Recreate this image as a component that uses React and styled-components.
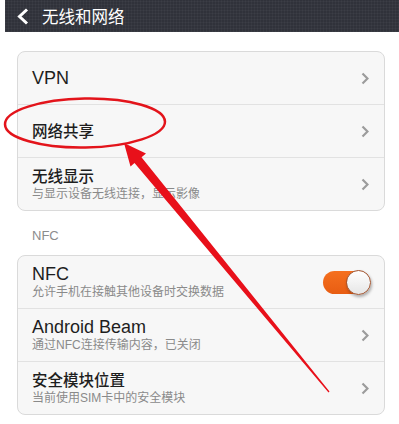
import React from 'react';
import styled, { createGlobalStyle } from 'styled-components';

const GlobalStyle = createGlobalStyle`
  body {
    margin: 0;
    background: #ffffff;
    font-family: "Liberation Sans", "Noto Sans CJK SC", sans-serif;
  }
`;

const Page = styled.div`
  position: relative;
  width: 399px;
  height: 424px;
  overflow: hidden;
  background: #ffffff;
`;

const Header = styled.div`
  margin-left: 5px;
  height: 32px;
  display: flex;
  align-items: center;
  gap: 13px;
  padding-left: 12px;
  background: #30323a;
  background-image: repeating-linear-gradient(0deg, rgba(255,255,255,0.03) 0 1px, transparent 1px 3px),
    repeating-linear-gradient(90deg, rgba(255,255,255,0.03) 0 1px, transparent 1px 3px);
  color: #ffffff;
  font-size: 16.5px;
`;

const Content = styled.div`
  padding: 19px 14px 0 17px;
`;

const Card = styled.div`
  background: #f7f7f7;
  border: 1px solid #dadada;
  border-radius: 8px;
  overflow: hidden;
`;

const Row = styled.div`
  height: 52px;
  display: flex;
  align-items: center;
  padding: 0 15px 0 14px;
  border-top: ${(p) => (p.$first ? 'none' : '1px solid #e2e2e2')};
`;

const Texts = styled.div`
  flex: 1;
  display: flex;
  flex-direction: column;
`;

const Title = styled.div`
  font-size: ${(p) => (p.$cjk ? '15.5px' : '18px')};
  font-weight: ${(p) => (p.$cjk ? 500 : 400)};
  color: #1e1e1e;
  line-height: ${(p) => (p.$cjk ? '19px' : '20px')};
`;

const Sub = styled.div`
  font-size: 12px;
  color: #8a8a8a;
  line-height: 15px;
  margin-top: 1px;
`;

const Section = styled.div`
  font-size: 13px;
  color: #8c8c8c;
  padding: 17px 0 0 15px;
  height: 27px;
`;

const Toggle = styled.div`
  position: relative;
  width: 47px;
  height: 23px;
  border-radius: 12px;
  background: linear-gradient(180deg, #f5701f, #e85d12);
  margin-right: -1px;
`;

const Knob = styled.div`
  position: absolute;
  right: -1px;
  top: -1px;
  width: 23px;
  height: 23px;
  border-radius: 50%;
  background: linear-gradient(180deg, #ffffff, #e6e6e6);
  border: 1px solid #a0522d;
  box-shadow: 1px 2px 3px rgba(0,0,0,0.3);
`;

const Overlay = styled.svg`
  position: absolute;
  left: 0;
  top: 0;
  pointer-events: none;
`;

const Chevron = () => (
  <svg width="8" height="13" viewBox="0 0 8 13">
    <polyline points="1.5,1.5 6.5,6.5 1.5,11.5" fill="none" stroke="#9c9c9c" strokeWidth="2.2" />
  </svg>
);

const BackIcon = () => (
  <svg width="12" height="17" viewBox="0 0 12 17">
    <polyline points="10,1.5 2.5,8.5 10,15.5" fill="none" stroke="#ffffff" strokeWidth="3" />
  </svg>
);

const Item = ({ title, sub, cjk, first, right }) => (
  <Row $first={first}>
    <Texts>
      <Title $cjk={cjk}>{title}</Title>
      {sub && <Sub>{sub}</Sub>}
    </Texts>
    {right || <Chevron />}
  </Row>
);

export default function App() {
  return (
    <Page>
      <GlobalStyle />
      <Header>
        <BackIcon />
        <span>无线和网络</span>
      </Header>
      <Content>
        <Card>
          <Item first title="VPN" />
          <Item cjk title="网络共享" />
          <Item cjk title="无线显示" sub="与显示设备无线连接，显示影像" />
        </Card>
        <Section>NFC</Section>
        <Card>
          <Item
            first
            title="NFC"
            sub="允许手机在接触其他设备时交换数据"
            right={
              <Toggle>
                <Knob />
              </Toggle>
            }
          />
          <Item title="Android Beam" sub="通过NFC连接传输内容，已关闭" />
          <Item cjk title="安全模块位置" sub="当前使用SIM卡中的安全模块" />
        </Card>
      </Content>
      <Overlay width="399" height="424" viewBox="0 0 399 424">
        <ellipse cx="85" cy="123" rx="80" ry="24.5" fill="none" stroke="#e3141b" strokeWidth="2.5" transform="rotate(-1 85 123)" />
        <polygon
          points="124,143 146,153.5 141.5,157.3 329.5,391.6 328.5,392.4 134.5,163 130.5,166.5"
          fill="#e8101a"
        />
      </Overlay>
    </Page>
  );
}
